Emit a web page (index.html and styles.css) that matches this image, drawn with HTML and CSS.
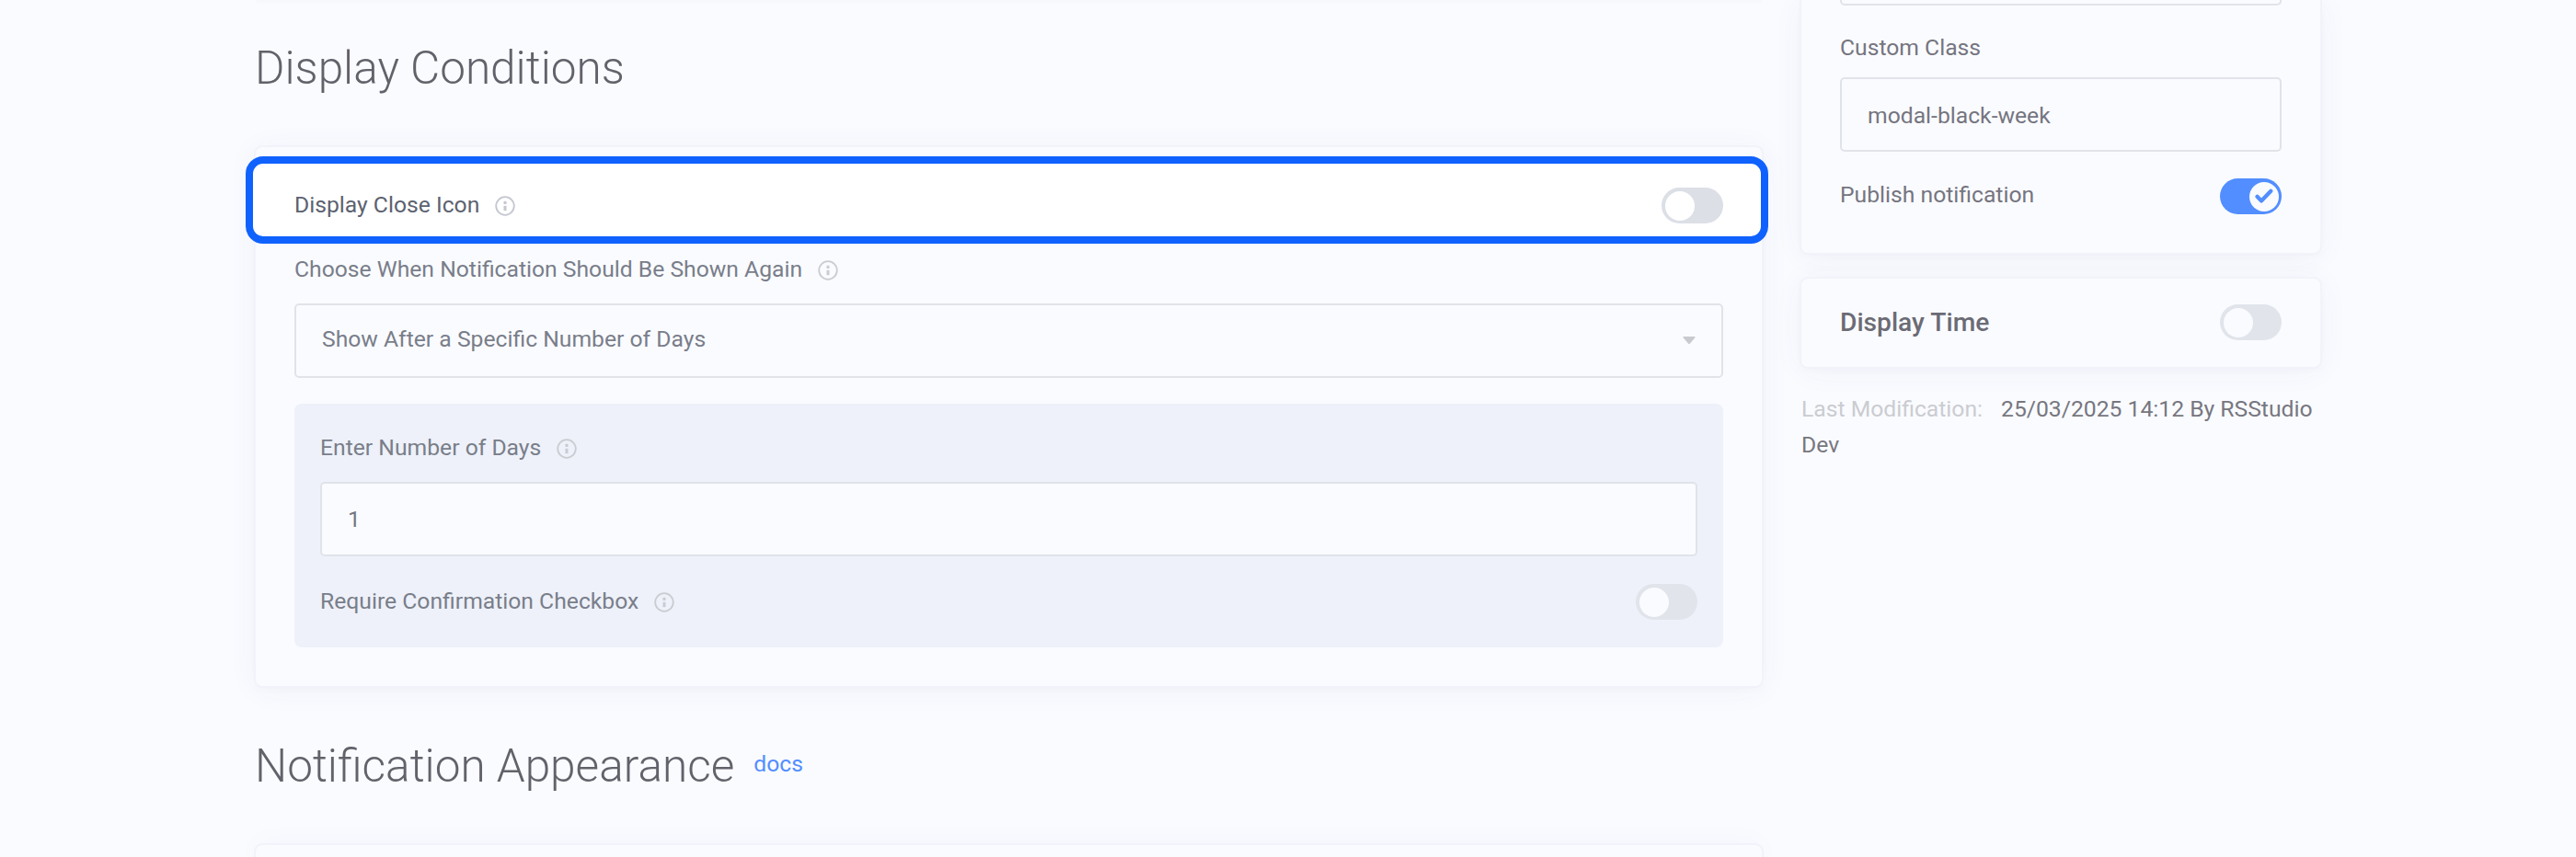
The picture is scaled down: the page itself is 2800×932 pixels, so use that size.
FILE: index.html
```html
<!DOCTYPE html>
<html lang="en">
<head>
<meta charset="utf-8">
<title>Notification settings</title>
<link rel="stylesheet" href="styles.css">
</head>
<body>
<svg class="sprite" aria-hidden="true">
  <symbol id="info" viewBox="0 0 22 22">
    <circle cx="11" cy="11" r="9.8" fill="none" stroke="currentColor" stroke-width="1.8"/>
    <rect x="9.5" y="5.8" width="3" height="3.2" fill="currentColor"/>
    <rect x="9.5" y="10.8" width="3" height="5.4" fill="currentColor"/>
  </symbol>
</svg>
<div class="page">
  <main class="main">
    <div class="card card-previous"></div>
    <h2 class="heading">Display Conditions</h2>
    <section class="card card-conditions">
      <div class="highlight"></div>
      <div class="row row-close">
        <span class="label label-strong">Display Close Icon</span>
        <svg class="info info-strong"><use href="#info"/></svg>
        <span class="toggle toggle-strong"></span>
      </div>
      <div class="row row-again">
        <span class="label">Choose When Notification Should Be Shown Again</span>
        <svg class="info"><use href="#info"/></svg>
      </div>
      <div class="field select">
        <span class="select-text">Show After a Specific Number of Days</span>
        <svg class="caret" viewBox="0 0 14 9"><path d="M1.5 0h11q2 0 .7 1.600L8 7.600q-1 1-2 0L.8 1.600Q-.5 0 1.500 0z" fill="#c9cad0"/></svg>
      </div>
      <div class="panel">
        <div class="row">
          <span class="label">Enter Number of Days</span>
          <svg class="info"><use href="#info"/></svg>
        </div>
        <div class="field days"><span class="value">1</span></div>
        <div class="row row-confirm">
          <span class="label">Require Confirmation Checkbox</span>
          <svg class="info"><use href="#info"/></svg>
          <span class="toggle"></span>
        </div>
      </div>
    </section>
    <h2 class="heading heading-appearance">Notification Appearance<a class="docs">docs</a></h2>
    <section class="card card-next"></section>
  </main>
  <aside class="side">
    <section class="card card-publish">
      <div class="field field-cut"></div>
      <div class="row row-class"><span class="side-label">Custom Class</span></div>
      <div class="field"><span class="value side-value">modal-black-week</span></div>
      <div class="row row-publish">
        <span class="side-label publish-label">Publish notification</span>
        <span class="toggle toggle-on"><svg class="check" viewBox="0 0 20 20"><path d="M2.500 10.800l4.500 4.700L17.300 4.700" fill="none" stroke="#528eff" stroke-width="4.200" stroke-linecap="round" stroke-linejoin="round"/></svg></span>
      </div>
    </section>
    <section class="card card-time">
      <div class="row">
        <span class="time-label">Display Time</span>
        <span class="toggle"></span>
      </div>
    </section>
    <p class="modified"><span class="modified-key">Last Modification:</span>25/03/2025 14:12 By RSStudio Dev</p>
  </aside>
</div>
</body>
</html>
```
FILE: styles.css
```css
* { box-sizing: border-box; }
body {
  margin: 0;
  height: 932px;
  overflow: hidden;
  background: #fafbff;
  font-family: Roboto, "Liberation Sans", sans-serif;
  font-size: 24.7px;
  color: #75757f;
}
.sprite { display: none; }
.page {
  display: grid;
  grid-template-columns: 1637px 564px;
  column-gap: 43px;
  padding-left: 278px;
  height: 932px;
}
.card {
  position: relative;
  background: #fafbff;
  border-radius: 7px;
  box-shadow: 0 0 0 2px #f2f3fa, 0 3px 34px rgba(60, 80, 130, .055), 0 3px 8px rgba(60, 80, 130, .03);
}
.card-previous {
  height: 2px;
  border-radius: 0 0 7px 7px;
  background: #f7f8fc;
  box-shadow: 0 1px 2px #f7f8fc, 0 3px 34px rgba(60, 80, 130, .05);
}
.heading {
  margin: 0 0 13px -1px;
  height: 145px;
  line-height: 145px;
  font-size: 49.5px;
  font-weight: 300;
  color: #62626b;
}
.heading-appearance {
  display: flex;
  gap: 21px;
  margin: 0 0 0 -1px;
  height: 173px;
  line-height: 174px;
}
.docs { font-size: 24.7px; font-weight: 400; line-height: 170px; color: #528eff; }
.card-conditions { height: 586px; padding: 44px 42px 42px; }
.card-next { height: 13px; border-radius: 7px 7px 0 0; }
.highlight {
  position: absolute;
  left: -11px;
  top: 10px;
  width: 1655px;
  height: 95px;
  border: 8px solid #1062fe;
  border-radius: 19px;
  background: #fff;
}
.row { position: relative; display: flex; align-items: center; height: 39px; }
.row-again { margin: 31px 0 17px; }
.row-confirm { margin-top: 30px; }
.label { line-height: 37px; height: 39px; color: #797e8a; }
.label-strong { color: #5c6270; }
.info { width: 22px; height: 22px; margin-left: 17px; color: #cbccd1; }
.info-strong { color: #c5c7d0; }
.toggle {
  position: relative;
  display: flex;
  width: 67px;
  height: 39px;
  margin-left: auto;
  padding: 3.5px;
  border-radius: 20px;
  background: #e1e4eb;
}
.toggle::before {
  content: "";
  width: 32px;
  height: 32px;
  border-radius: 50%;
  background: #fafbff;
}
.toggle-strong { background: #dcdfe6; }
.toggle-strong::before { background: #fff; }
.toggle-on { justify-content: flex-end; background: #528eff; }
.check { position: absolute; right: 9px; top: 9px; width: 20px; height: 20px; }
.field {
  display: flex;
  align-items: center;
  height: 81px;
  padding: 0 28px;
  border: 2px solid #e1e3ea;
  border-radius: 5px;
  background: #fafbff;
}
.select { justify-content: space-between; color: #797e8a; }
.select-text { line-height: 36px; padding-bottom: 3px; }
.caret { width: 14px; height: 9px; }
.panel {
  margin-top: 28px;
  height: 265px;
  padding: 29px 28px 30px;
  border-radius: 8px;
  background: #eef1f9;
}
.days { margin-top: 17px; }
.card-publish { height: 275px; padding: 0 42px; border-radius: 0 0 7px 7px; }
.field-cut { height: 6px; border-top: 0; border-radius: 0 0 5px 5px; }
.row-class { margin: 26px 0 13px; }
.side-value { padding-top: 2px; }
.row-publish { margin-top: 29px; }
.publish-label { height: 39px; line-height: 36px; }
.card-time { margin-top: 28px; height: 96px; padding: 28px 42px; }
.time-label { font-size: 28.200px; font-weight: 500; color: #6b6b75; }
.modified { margin: 26px 0 0; line-height: 39px; color: #777780; }
.modified-key { margin-right: 20px; color: #caccd1; }
```
